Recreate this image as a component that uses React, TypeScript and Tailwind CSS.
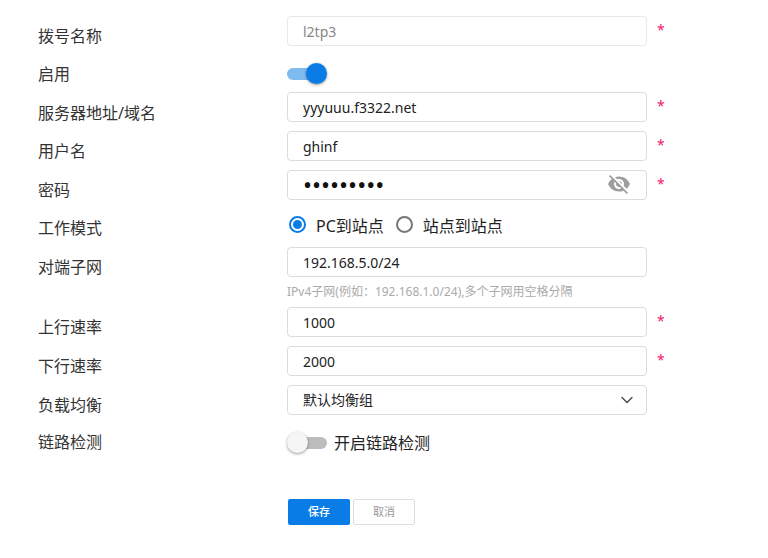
import React from 'react';
import { MdVisibilityOff } from 'react-icons/md';
import { ChevronDown } from 'lucide-react';

const font = "font-['Noto_Sans','Noto_Sans_CJK_SC',sans-serif]";

function Star() {
  return <span className="ml-[10px] -mt-[2px] h-[24px] text-[14px] leading-[24px] text-[#f5166b]">*</span>;
}

function Row({ label, labelTop, height, mb, children }: { label: string; labelTop: string; height: string; mb: string; children: React.ReactNode }) {
  return (
    <div className={`flex items-start ${height} ${mb}`}>
      <label className={`w-[249px] shrink-0 text-[16px] leading-[24px] text-[#333] ${labelTop}`}>{label}</label>
      <div className="flex h-full items-center">{children}</div>
    </div>
  );
}

function TextInput({ value, disabled }: { value: string; disabled?: boolean }) {
  return (
    <input
      readOnly
      value={value}
      className={`h-[30px] w-[360px] rounded-[4px] border border-[#dcdcdc] px-[15px] text-[14px] outline-none ${disabled ? 'border-[#e8e8e8] text-[#888]' : 'text-[#222]'}`}
    />
  );
}

export default function App() {
  return (
    <div className={`h-[558px] w-[768px] overflow-hidden bg-white pt-[16px] pl-[38px] ${font}`}>
      <Row label="拨号名称" labelTop="mt-[8px]" height="h-[30px]" mb="mb-[9px]">
        <TextInput value="l2tp3" disabled />
        <Star />
      </Row>
      <Row label="启用" labelTop="mt-[7px]" height="h-[28px]" mb="mb-[9px]">
        <div className="relative mt-[10px] h-[12px] w-[40px]">
          <div className="h-[12px] w-[34px] rounded-full bg-[#80bbf0]" />
          <div className="absolute top-[-5px] right-0 h-[21px] w-[21px] rounded-full bg-[#0a7ce6] shadow-[0_1px_3px_rgba(0,0,0,0.4)]" />
        </div>
      </Row>
      <Row label="服务器地址/域名" labelTop="mt-[9px]" height="h-[30px]" mb="mb-[9px]">
        <TextInput value="yyyuuu.f3322.net" />
        <Star />
      </Row>
      <Row label="用户名" labelTop="mt-[8px]" height="h-[30px]" mb="mb-[9px]">
        <TextInput value="ghinf" />
        <Star />
      </Row>
      <Row label="密码" labelTop="mt-[8px]" height="h-[30px]" mb="mb-[9px]">
        <div className="relative">
          <input
            readOnly
            type="password"
            value="abcdefghi"
            className="h-[30px] w-[360px] rounded-[4px] border border-[#dcdcdc] px-[15px] pt-[1px] text-[24px] text-[#111] outline-none"
          />
          <MdVisibilityOff className="absolute top-[2px] right-[16px] text-[24px] text-[#9e9e9e]" />
        </div>
        <Star />
      </Row>
      <Row label="工作模式" labelTop="mt-[7px]" height="h-[30px]" mb="mb-[8px]">
        <div className="flex items-center text-[16px] text-[#222]">
          <span className="ml-[2px] flex h-[17px] w-[17px] items-center justify-center rounded-full border-2 border-[#0a7ce6]">
            <span className="h-[9px] w-[9px] rounded-full bg-[#0a7ce6]" />
          </span>
          <span className="ml-[10px] mt-[3px]">PC到站点</span>
          <span className="ml-[12px] h-[17px] w-[17px] rounded-full border-2 border-[#757575]" />
          <span className="ml-[10px] mt-[3px]">站点到站点</span>
        </div>
      </Row>
      <Row label="对端子网" labelTop="mt-[8px]" height="h-[30px]" mb="mb-0">
        <TextInput value="192.168.5.0/24" />
      </Row>
      <div className="flex h-[30px] items-center pl-[249px] text-[12px] text-[#aaa]">
        IPv4子网(例如：192.168.1.0/24),多个子网用空格分隔
      </div>
      <Row label="上行速率" labelTop="mt-[8px]" height="h-[30px]" mb="mb-[9px]">
        <TextInput value="1000" />
        <Star />
      </Row>
      <Row label="下行速率" labelTop="mt-[8px]" height="h-[30px]" mb="mb-[9px]">
        <TextInput value="2000" />
        <Star />
      </Row>
      <Row label="负载均衡" labelTop="mt-[8px]" height="h-[30px]" mb="mb-[9px]">
        <div className="flex h-[30px] w-[360px] items-center justify-between rounded-[4px] border border-[#dcdcdc] pr-[9px] pl-[15px] text-[14px] text-[#222]">
          <span className="-mt-[2px]">默认均衡组</span>
          <ChevronDown size={20} strokeWidth={1.5} className="text-[#444]" />
        </div>
      </Row>
      <Row label="链路检测" labelTop="mt-[6px]" height="h-[38px]" mb="mb-[37px]">
        <div className="relative h-[12px] w-[40px]">
          <div className="ml-[6px] h-[12px] w-[34px] rounded-full bg-[#bdbdbd]" />
          <div className="absolute top-[-5px] left-0 h-[21px] w-[21px] rounded-full bg-[#f5f5f5] shadow-[0_1px_3px_rgba(0,0,0,0.4)]" />
        </div>
        <span className="ml-[7px] text-[16px] text-[#222]">开启链路检测</span>
      </Row>
      <div className="flex pl-[250px]">
        <button className="h-[26px] w-[62px] rounded-[2px] bg-[#0a7ce6] text-[11px] font-medium text-white">保存</button>
        <button className="ml-[3px] h-[26px] w-[62px] rounded-[2px] border border-[#dedede] bg-white text-[11px] text-[#999]">取消</button>
      </div>
    </div>
  );
}
